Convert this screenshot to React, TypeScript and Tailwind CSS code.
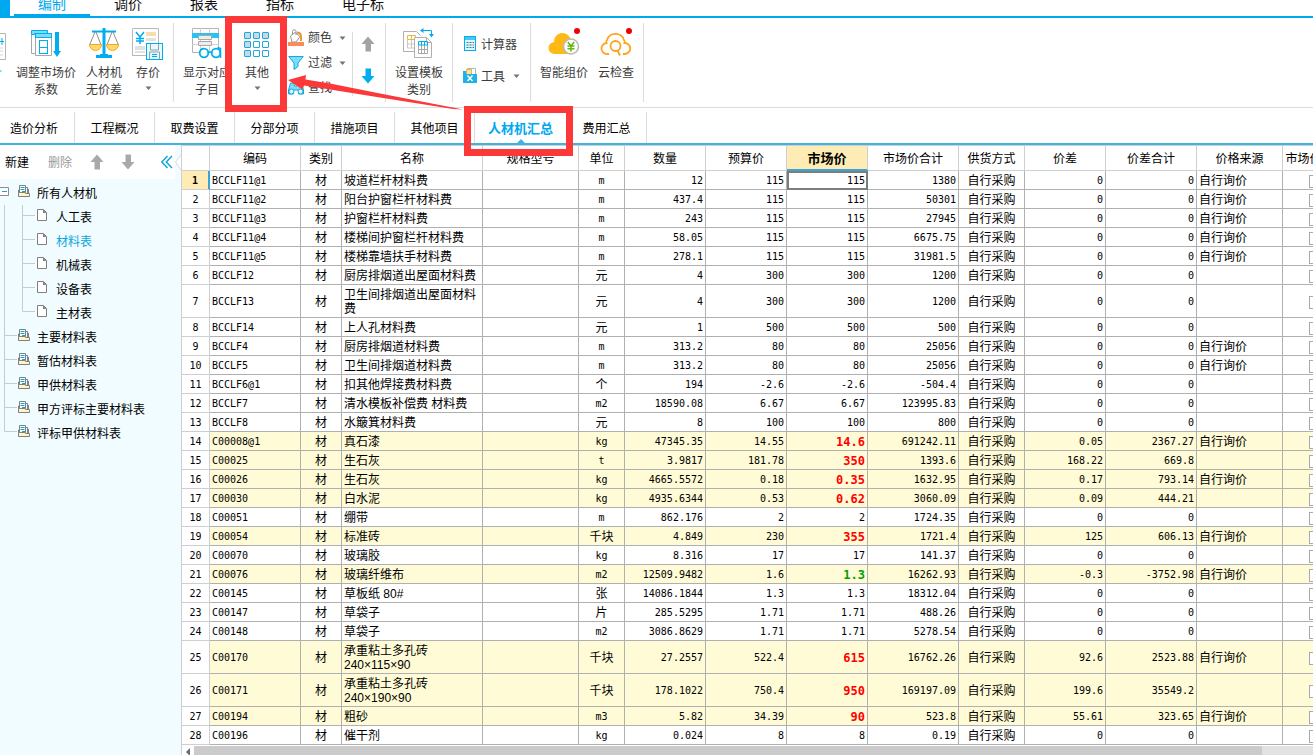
import React from "react";

const CYAN = "#00aeef";

function Caret({ className = "" }: { className?: string }) {
  return (
    <svg className={className} width="7" height="4" viewBox="0 0 7 4" aria-hidden="true">
      <path d="M0.5 0.5h6L3.5 4z" fill="#6f7480" />
    </svg>
  );
}

function ArrowUp({ color }: { color: string }) {
  return (
    <svg width="14" height="16" viewBox="0 0 14 16" aria-hidden="true">
      <path d="M7 0.5L13.5 8H10v7.5H4.500V8H0.500z" fill={color} />
    </svg>
  );
}

function ArrowDown({ color }: { color: string }) {
  return (
    <svg width="14" height="16" viewBox="0 0 14 16" aria-hidden="true">
      <path d="M7 15.5L0.5 8H4.5V0.5H10V8h3.5z" fill={color} />
    </svg>
  );
}

function AdjustIcon() {
  return (
    <svg width="30" height="32" viewBox="0 0 30 32" fill="none" aria-hidden="true">
      <path d="M0.500 5v20.500H4" stroke="#a8a8a8" />
      <path d="M0.500 2.500h16v3h-13v1h-3z" fill="#7fdcf8" stroke={CYAN} />
      <path d="M4.500 9v18.500h16V9" stroke="#a8a8a8" fill="#fff" />
      <rect x="4.500" y="5.500" width="16" height="4" fill="#7fdcf8" stroke={CYAN} />
      <rect x="8.500" y="12.500" width="8" height="13" stroke={CYAN} />
      <path d="M8.500 19.500h8" stroke={CYAN} />
      <path d="M24 4h4v19h2l-4 6-4-6h2z" fill={CYAN} />
    </svg>
  );
}

function ScaleIcon() {
  return (
    <svg width="32" height="32" viewBox="0 0 32 32" fill="none" aria-hidden="true">
      <path d="M7 4L1.5 17M8 4l5 13M24 4l-5 13M25 4l5.5 13" stroke="#909090" />
      <path d="M1.500 16.500h12a6 6 0 0 1-12 0zM18.500 16.500h12a6 6 0 0 1-12 0z" fill="#ffd96b" stroke="#f5a623" />
      <path d="M4 3.500h24" stroke={CYAN} strokeWidth="2" />
      <path d="M16 0v28" stroke={CYAN} strokeWidth="3" />
      <path d="M12 26h8v1h4v3H8v-3h4z" fill={CYAN} />
    </svg>
  );
}

function SavePriceIcon() {
  return (
    <svg width="32" height="32" viewBox="0 0 32 32" fill="none" aria-hidden="true">
      <path d="M14 27.500H0.500V0.500h26V15" stroke="#b8b8b8" fill="#fff" />
      <path d="M14 4h10v4H14z" fill="#f3dfae" />
      <path d="M14 10h10v3H14zM3 18h10v4H3zM3 23h10v2H3z" fill="#e2e2e2" />
      <path d="M4 4l4 5 4-5M8 9v7M4 10.500h8M4 13h8" stroke={CYAN} strokeWidth="1.500" />
      <rect x="14.500" y="15.500" width="16" height="16" fill="#e8f9fe" stroke={CYAN} />
      <path d="M18.500 16v6h8v-6M17.500 31v-7h10v7" stroke="#8aa3ad" />
      <path d="M20 26.500h5M20 28.500h5" stroke={CYAN} />
    </svg>
  );
}

function ShowRowsIcon() {
  return (
    <svg width="30" height="32" viewBox="0 0 30 32" fill="none" aria-hidden="true">
      <path d="M0.500 0.500h26v24h-26z" stroke="#b4b4b4" fill="#fff" />
      <path d="M8.500 0v24M17.500 0v24M0 16.500h27" stroke="#d0d0d0" />
      <path d="M0 10V5h27v5z" fill="#29c1f2" />
      <path d="M6.500 7.500h13v4h-13zM6.500 13.500h13v4h-13z" fill="#ededed" stroke="#a8a8a8" />
      <circle cx="12" cy="25" r="4.300" stroke={CYAN} strokeWidth="1.800" fill="#fff" />
      <circle cx="24" cy="25" r="4.300" stroke={CYAN} strokeWidth="1.800" fill="#fff" />
      <path d="M8 23l3-3M28.500 30V20.500l-3-1M16 25q2-2 4 0" stroke={CYAN} strokeWidth="1.500" />
    </svg>
  );
}

function GridIcon() {
  const cells = [0, 1, 2, 3, 4, 5, 6, 7, 8];
  return (
    <svg width="26" height="28" viewBox="0 0 26 28" fill="none" aria-hidden="true">
      {cells.map((n) => (
        <rect
          key={n}
          x={(n % 3) * 9 + 0.5}
          y={Math.floor(n / 3) * 9 + 0.5}
          width="6"
          height="6"
          rx="0.5"
          stroke="#1ba9de"
          fill={n < 3 || n % 3 === 0 ? "#c3dbe8" : "#ffffff"}
        />
      ))}
    </svg>
  );
}

function ColorIcon() {
  return (
    <svg width="16" height="18" viewBox="0 0 16 18" fill="none" aria-hidden="true">
      <path d="M2.500 7L7 3.500l5 4-4 5.500H4z" fill="#fff" stroke="#959595" />
      <path d="M4.500 6V2.500a1.500 1.500 0 0 1 3.500 0V6" stroke="#959595" />
      <path d="M9 3.500c4 0 4.500 3 4 8.500" stroke="#e8912d" strokeWidth="1.800" />
      <rect y="13" width="16" height="4" fill="#f98a5c" />
    </svg>
  );
}

function FilterIcon() {
  return (
    <svg width="16" height="16" viewBox="0 0 16 16" fill="none" aria-hidden="true">
      <path d="M0.800 1.500h14.400L10 8v3.500L6 14.500V8z" fill="#7fdcf8" stroke="#12a9e0" />
    </svg>
  );
}

function FindIcon() {
  return (
    <svg width="16" height="16" viewBox="0 0 16 16" fill="none" aria-hidden="true">
      <path d="M2.500 3h3l1 3h3l1-3h3l2 7v4h-5v-4h-5v4h-5v-4z" fill="#7fdcf8" stroke="#12a9e0" />
      <circle cx="3.500" cy="11.500" r="2.500" fill="#d9f5fd" stroke="#12a9e0" />
      <circle cx="12.500" cy="11.500" r="2.500" fill="#d9f5fd" stroke="#12a9e0" />
    </svg>
  );
}

function TemplateIcon() {
  return (
    <svg width="32" height="32" viewBox="0 0 32 32" fill="none" aria-hidden="true">
      <path d="M12 23.500H0.500v-20h13l4 4" fill="#fff" stroke="#b0b0b0" />
      <path d="M4.500 7.500h8v4h-8zM8.500 7.500v4" stroke="#f0b73f" />
      <path d="M4.500 12v8h7M8.500 12v8M4.500 16h7" stroke="#c8c8c8" />
      <path d="M11.500 9.500h12l5 5v15h-17z" fill="#fff" stroke="#b0b0b0" />
      <path d="M23.500 9.500v5h5" stroke="#b0b0b0" />
      <path d="M15.500 17v8.500h9V17M18.500 17v9M21.500 17v9M15.500 21.500h9" stroke="#a8a8a8" />
      <path d="M15.500 17v-3.500h9V17zM18.500 13v4M21.500 13v4" stroke={CYAN} />
      <path d="M18 2.500h10.500V8" stroke={CYAN} />
      <path d="M20.500 0L17 2.500l3.500 2.500zM26 6l2.500 3.500L31 6z" fill={CYAN} />
    </svg>
  );
}

function CalculatorIcon() {
  return (
    <svg width="13" height="16" viewBox="0 0 13 16" fill="none" aria-hidden="true">
      <rect x="0.500" y="0.500" width="11" height="14" fill="#dff6fd" stroke={CYAN} />
      <path d="M1 1h10v3H1z" fill="#45c8f1" />
      <path d="M2.500 6.500h2M5.500 6.500h2M2.500 9h2M5.500 9h2M2.500 11.500h2M5.500 11.500h2M8.500 11.500h1.500" stroke="#2c7fa3" />
      <path d="M8.500 6.500h1.500M8.500 9h1.500" stroke="#e8483c" />
    </svg>
  );
}

function ToolsIcon() {
  return (
    <svg width="14" height="16" viewBox="0 0 14 16" fill="none" aria-hidden="true">
      <path d="M4.500 0.500h8v6h-8z" fill="#fff" stroke="#b5b5b5" />
      <path d="M3.500 1.500h5v5h-5z" fill="#fbe29d" stroke="#e6b440" />
      <path d="M0 3h3v3h11v9H0z" fill="#1fb2ea" />
      <path d="M4.500 7.500l5 5.500M9.500 7.500L4.500 13" stroke="#fff" strokeWidth="1.500" />
    </svg>
  );
}

function SmartPriceIcon() {
  return (
    <svg width="32" height="32" viewBox="0 0 32 32" fill="none" aria-hidden="true">
      <path d="M7 26a6 6 0 0 1-1-12 8.500 8.500 0 0 1 16-4.500L23 12v14z" fill="#ffb914" />
      <circle cx="23" cy="18.500" r="7.500" fill="#fff" stroke="#b9b9ad" strokeWidth="1.500" />
      <path d="M19.800 14l3.200 4 3.200-4M23 18v5.500M19.500 18h7M19.500 20.800h7" stroke="#62b80c" strokeWidth="1.500" />
      <circle cx="29" cy="3" r="3" fill="#f20000" />
    </svg>
  );
}

function CloudCheckIcon() {
  return (
    <svg width="32" height="32" viewBox="0 0 32 32" fill="none" aria-hidden="true">
      <path d="M9 26H7.500a5.500 5.500 0 0 1-1-11 3 3 0 0 1 0.500-3 9 9 0 0 1 17 0 3 3 0 0 1 0.500 3 5.500 5.500 0 0 1 0.500 11h-2" stroke="#ffa31a" strokeWidth="1.800" />
      <circle cx="15.500" cy="18" r="5" stroke="#ffa31a" strokeWidth="1.800" />
      <path d="M17.500 22.500l2.500 5" stroke="#ffa31a" strokeWidth="1.800" />
      <circle cx="29" cy="3" r="3" fill="#f20000" />
    </svg>
  );
}

function BookIcon() {
  return (
    <svg width="12" height="13" viewBox="0 0 12 13" fill="none" aria-hidden="true">
      <path d="M1.500 8V0.500h6v7" fill="#fff" stroke="#808080" />
      <path d="M8 2.500h1.500V8M10.500 4v4" stroke="#808080" />
      <path d="M0.500 5v6.500h11V8.500H7.500V7.500H1.500V5z" fill="#fff6c4" stroke="#808080" />
      <path d="M2.500 2.500h4M2.500 4.500h4M4 6.500h3" stroke="#1ba0d8" />
    </svg>
  );
}

function PageIcon() {
  return (
    <svg width="10" height="13" viewBox="0 0 10 13" fill="none" aria-hidden="true">
      <path d="M0.500 0.500h6l3 3v8h-9z" fill="#fff" stroke="#808080" />
      <path d="M6 0.500v3.500h3.500z" fill="#808080" />
    </svg>
  );
}

function BigButton({
  icon,
  lines,
  caret = false,
  width,
}: {
  icon: React.ReactNode;
  lines: string[];
  caret?: boolean;
  width: string;
}) {
  return (
    <button type="button" className={`flex shrink-0 flex-col items-center pt-2.5 ${width}`}>
      <span className="flex h-[37px] items-start justify-center">{icon}</span>
      {lines.map((line) => (
        <span key={line} className="whitespace-nowrap leading-[17px]">
          {line}
        </span>
      ))}
      {caret && <Caret className="mt-1" />}
    </button>
  );
}

function Divider() {
  return <span className="my-[5px] w-px shrink-0 bg-[#dcdcdc]" />;
}

function Ribbon() {
  return (
    <div className="flex h-[90px] shrink-0 overflow-hidden border-b border-[#dcdcdc] bg-white text-xs text-[#3c3c3c]">
      <div className="w-3 shrink-0 pt-[15px]">
        <svg width="6" height="42" viewBox="0 0 6 42" fill="none" aria-hidden="true">
          <path d="M0 0.500h5.500v26H0" stroke="#b5b5b5" />
          <path d="M0 8.500h4M2 5v7" stroke={CYAN} />
          <path d="M0 15h3M0 18h3M0 22h3" stroke="#d5d5d5" />
          <path d="M0 38h1.500" stroke={CYAN} />
        </svg>
      </div>
      <BigButton icon={<AdjustIcon />} lines={["调整市场价", "系数"]} width="w-[68px]" />
      <BigButton icon={<ScaleIcon />} lines={["人材机", "无价差"]} width="w-12" />
      <BigButton icon={<SavePriceIcon />} lines={["存价"]} caret width="w-10" />
      <span className="w-[5px] shrink-0" />
      <Divider />
      <BigButton icon={<ShowRowsIcon />} lines={["显示对应", "子目"]} width="w-[66px]" />
      <BigButton
        icon={
          <span className="pt-1">
            <GridIcon />
          </span>
        }
        lines={["其他"]}
        caret
        width="w-[34px]"
      />
      <div className="flex w-[78px] shrink-0 flex-col gap-[9px] pt-3 pl-3.5">
        <button type="button" className="flex h-4 items-center gap-1">
          <ColorIcon />
          <span className="flex-1 text-left">颜色</span>
          <Caret className="mr-1.5" />
        </button>
        <button type="button" className="flex h-4 items-center gap-1">
          <FilterIcon />
          <span className="flex-1 text-left">过滤</span>
          <Caret className="mr-1.5" />
        </button>
        <button type="button" className="flex h-4 items-center gap-1">
          <FindIcon />
          <span>查找</span>
        </button>
      </div>
      <span className="mt-3.5 h-16 w-px shrink-0 bg-[#dcdcdc]" />
      <div className="mr-0.5 flex w-[30px] shrink-0 flex-col items-center gap-4 pt-[18px]">
        <button type="button" aria-label="上移">
          <ArrowUp color="#a3a3a3" />
        </button>
        <button type="button" aria-label="下移">
          <ArrowDown color="#00aeef" />
        </button>
      </div>
      <Divider />
      <BigButton icon={<TemplateIcon />} lines={["设置模板", "类别"]} width="w-[66px]" />
      <Divider />
      <div className="flex w-[77px] shrink-0 flex-col gap-4 pt-[18px] pl-2.5">
        <button type="button" className="flex h-4 items-center">
          <span className="w-[18px] pl-px">
            <CalculatorIcon />
          </span>
          <span className="pt-0.5">计算器</span>
        </button>
        <button type="button" className="flex h-4 items-center">
          <span className="w-[18px]">
            <ToolsIcon />
          </span>
          <span className="pt-0.5">工具</span>
          <Caret className="ml-2" />
        </button>
      </div>
      <Divider />
      <BigButton icon={<SmartPriceIcon />} lines={["智能组价"]} width="w-[66px]" />
      <BigButton icon={<CloudCheckIcon />} lines={["云检查"]} width="w-[38px]" />
      <span className="w-2 shrink-0" />
      <Divider />
    </div>
  );
}

const mainTabs = ["编制", "调价", "报表", "指标", "电子标"];

function MainTabs() {
  return (
    <nav className="flex h-[18px] shrink-0 items-end overflow-hidden border-b-2 border-[#00a8f0] text-sm">
      <span className="h-4 w-2.5 bg-[#00a8f0]" />
      <span className="w-1" />
      {mainTabs.map((tab, i) => (
        <a
          key={tab}
          href="#"
          className={
            i === 0
              ? "w-[76px] border-b-2 border-[#00a8f0] text-center leading-5 whitespace-nowrap text-[#00a8f0]"
              : "w-[76px] pb-0.5 pl-6 leading-5 whitespace-nowrap text-[#111111]"
          }
        >
          {tab}
        </a>
      ))}
    </nav>
  );
}

const sections = ["工程概况", "取费设置", "分部分项", "措施项目", "其他项目"];

function SectionTabs() {
  return (
    <nav className="flex h-[37px] shrink-0 border-b-2 border-[#3fb4e4] pt-1 text-xs text-black">
      <a href="#" className="flex w-[75px] items-center border-r border-[#dcdcdc] pt-0.5 pl-2.5">
        造价分析
      </a>
      {sections.map((s) => (
        <a key={s} href="#" className="flex w-20 items-center justify-center border-r border-[#dcdcdc] pt-0.5">
          {s}
        </a>
      ))}
      <a
        href="#"
        className="relative flex w-[92px] items-center justify-center border-r border-[#dcdcdc] pt-0.5 text-[13px] font-bold text-[#00a8f0]"
      >
        人材机汇总
        <svg className="absolute bottom-0 left-[42px]" width="8" height="4" viewBox="0 0 8 4" aria-hidden="true">
          <path d="M4 0l4 4H0z" fill="#3fb4e4" />
        </svg>
      </a>
      <a href="#" className="flex w-20 items-center justify-center border-r border-[#dcdcdc] pt-0.5">
        费用汇总
      </a>
    </nav>
  );
}

function ChildRow({ label, active = false, last = false }: { label: string; active?: boolean; last?: boolean }) {
  return (
    <li className="flex h-6">
      <svg width="37" height="24" viewBox="0 0 37 24" fill="none" aria-hidden="true">
        <path d={last ? "M4.500 0v24M22.500 0v10.500H35" : "M4.500 0v24M22.500 0v24M22.500 10.500H35"} stroke="#c6cccd" />
      </svg>
      <span className="w-[19px] pt-1">
        <PageIcon />
      </span>
      <a href="#" className={active ? "leading-[26px] text-[#0aa5e0]" : "leading-[26px] text-black"}>
        {label}
      </a>
    </li>
  );
}

function GroupRow({ label, last = false }: { label: string; last?: boolean }) {
  return (
    <li className="flex h-6">
      <svg width="18" height="24" viewBox="0 0 18 24" fill="none" aria-hidden="true">
        <path d={last ? "M4.500 0v10.500H17" : "M4.500 0v24M4.500 10.500H17"} stroke="#c6cccd" />
      </svg>
      <span className="w-[19px] pt-1">
        <BookIcon />
      </span>
      <a href="#" className="leading-[26px] whitespace-nowrap text-black">
        {label}
      </a>
    </li>
  );
}

function Sidebar() {
  return (
    <aside className="w-[181px] shrink-0 bg-[#f0fcff] text-xs">
      <div className="flex h-[34px]">
        <div className="flex w-[175px] items-center bg-white pl-[5px]">
          <button type="button" className="w-[43px] pt-0.5 text-left text-black">
            新建
          </button>
          <button type="button" className="w-[42px] pt-0.5 text-left text-[#9a9a9a]">
            删除
          </button>
          <button type="button" aria-label="上移" className="w-[31px]">
            <ArrowUp color="#a9a9a9" />
          </button>
          <button type="button" aria-label="下移" className="w-10">
            <ArrowDown color="#a9a9a9" />
          </button>
          <button type="button" aria-label="收起">
            <svg width="12" height="14" viewBox="0 0 12 14" fill="none" aria-hidden="true">
              <path d="M6.500 1L0.800 7l5.700 6M11 1L5.300 7l5.700 6" stroke="#14a5d8" strokeWidth="1.500" />
            </svg>
          </button>
        </div>
        <svg width="6" height="34" viewBox="0 0 6 34" fill="none" aria-hidden="true">
          <path d="M6 10L0 17l6 8z" fill="#fff" />
          <path d="M6 10L0.500 17 6 25" stroke="#d3d8da" />
        </svg>
      </div>
      <ul className="pt-0.5">
        <li>
          <div className="flex h-6">
            <button type="button" aria-label="折叠" className="flex w-[18px] items-start pt-1.5">
              <svg width="9" height="9" viewBox="0 0 9 9" fill="none" aria-hidden="true">
                <path d="M-0.500 0.500h9v8h-9z" fill="#fff" stroke="#8c8c8c" />
                <path d="M2 4.500h5" stroke="#1ba0d8" />
              </svg>
            </button>
            <span className="w-[19px] pt-1">
              <BookIcon />
            </span>
            <a href="#" className="leading-[26px] text-black">
              所有人材机
            </a>
          </div>
          <ul>
            <ChildRow label="人工表" />
            <ChildRow label="材料表" active />
            <ChildRow label="机械表" />
            <ChildRow label="设备表" />
            <ChildRow label="主材表" last />
          </ul>
        </li>
        <GroupRow label="主要材料表" />
        <GroupRow label="暂估材料表" />
        <GroupRow label="甲供材料表" />
        <GroupRow label="甲方评标主要材料表" />
        <GroupRow label="评标甲供材料表" last />
      </ul>
    </aside>
  );
}

type Item = {
  code: string;
  name: string;
  unit: string;
  qty: string;
  budget: string;
  market: string;
  total: string;
  diff: string;
  diffTotal: string;
  source?: boolean;
  tone?: "up" | "down";
};

function item(
  code: string,
  name: string,
  unit: string,
  qty: string,
  budget: string,
  market: string,
  total: string,
  diff = "0",
  diffTotal = "0",
  source = false,
  tone?: "up" | "down",
): Item {
  return { code, name, unit, qty, budget, market, total, diff, diffTotal, source, tone };
}

const items: Item[] = [
  item("BCCLF11@1", "坡道栏杆材料费", "m", "12", "115", "115", "1380", "0", "0", true),
  item("BCCLF11@2", "阳台护窗栏杆材料费", "m", "437.4", "115", "115", "50301", "0", "0", true),
  item("BCCLF11@3", "护窗栏杆材料费", "m", "243", "115", "115", "27945", "0", "0", true),
  item("BCCLF11@4", "楼梯间护窗栏杆材料费", "m", "58.05", "115", "115", "6675.75", "0", "0", true),
  item("BCCLF11@5", "楼梯靠墙扶手材料费", "m", "278.1", "115", "115", "31981.5", "0", "0", true),
  item("BCCLF12", "厨房排烟道出屋面材料费", "元", "4", "300", "300", "1200"),
  item("BCCLF13", "卫生间排烟道出屋面材料费", "元", "4", "300", "300", "1200"),
  item("BCCLF14", "上人孔材料费", "元", "1", "500", "500", "500"),
  item("BCCLF4", "厨房排烟道材料费", "m", "313.2", "80", "80", "25056", "0", "0", true),
  item("BCCLF5", "卫生间排烟道材料费", "m", "313.2", "80", "80", "25056", "0", "0", true),
  item("BCCLF6@1", "扣其他焊接费材料费", "个", "194", "-2.6", "-2.6", "-504.4"),
  item("BCCLF7", "清水模板补偿费 材料费", "m2", "18590.08", "6.67", "6.67", "123995.83"),
  item("BCCLF8", "水簸箕材料费", "元", "8", "100", "100", "800"),
  item("C00008@1", "真石漆", "kg", "47345.35", "14.55", "14.6", "691242.11", "0.05", "2367.27", true, "up"),
  item("C00025", "生石灰", "t", "3.9817", "181.78", "350", "1393.6", "168.22", "669.8", false, "up"),
  item("C00026", "生石灰", "kg", "4665.5572", "0.18", "0.35", "1632.95", "0.17", "793.14", true, "up"),
  item("C00030", "白水泥", "kg", "4935.6344", "0.53", "0.62", "3060.09", "0.09", "444.21", false, "up"),
  item("C00051", "绷带", "m", "862.176", "2", "2", "1724.35"),
  item("C00054", "标准砖", "千块", "4.849", "230", "355", "1721.4", "125", "606.13", true, "up"),
  item("C00070", "玻璃胶", "kg", "8.316", "17", "17", "141.37"),
  item("C00076", "玻璃纤维布", "m2", "12509.9482", "1.6", "1.3", "16262.93", "-0.3", "-3752.98", true, "down"),
  item("C00145", "草板纸 80#", "张", "14086.1844", "1.3", "1.3", "18312.04"),
  item("C00147", "草袋子", "片", "285.5295", "1.71", "1.71", "488.26"),
  item("C00148", "草袋子", "m2", "3086.8629", "1.71", "1.71", "5278.54"),
  item("C00170", "承重粘土多孔砖\n240×115×90", "千块", "27.2557", "522.4", "615", "16762.26", "92.6", "2523.88", true, "up"),
  item("C00171", "承重粘土多孔砖\n240×190×90", "千块", "178.1022", "750.4", "950", "169197.09", "199.6", "35549.2", false, "up"),
  item("C00194", "粗砂", "m3", "5.82", "34.39", "90", "523.8", "55.61", "323.65", true, "up"),
  item("C00196", "催干剂", "kg", "0.024", "8", "8", "0.19"),
];

const columns: { title: string; width: string }[] = [
  { title: "", width: "w-7" },
  { title: "编码", width: "w-[91px]" },
  { title: "类别", width: "w-[41px]" },
  { title: "名称", width: "w-[141px]" },
  { title: "规格型号", width: "w-24" },
  { title: "单位", width: "w-[46px]" },
  { title: "数量", width: "w-[81px]" },
  { title: "预算价", width: "w-[81px]" },
  { title: "市场价", width: "w-[81px]" },
  { title: "市场价合计", width: "w-[91px]" },
  { title: "供货方式", width: "w-[66px]" },
  { title: "价差", width: "w-[81px]" },
  { title: "价差合计", width: "w-[91px]" },
  { title: "价格来源", width: "w-[86px]" },
  { title: "市场价锁定", width: "w-[66px]" },
];

const cell = "border-r border-b border-[#b0b0b0] px-0.5 pt-[3px] pb-px";
const mono = "font-['DejaVu_Sans_Mono','Noto_Sans_CJK_SC',monospace] text-[10px]";
const strong = "font-['DejaVu_Sans_Mono',monospace] text-right text-xs leading-[14px] font-bold";

function isLatin(text: string) {
  return /^[\x20-\x7e]+$/.test(text);
}

function MaterialRow({ data, index }: { data: Item; index: number }) {
  const selected = index === 0;
  const tint = data.tone ? "bg-[#fffbd6]" : "bg-white";
  const num = `${cell} ${mono} text-right`;
  let market = num;
  if (data.tone === "up") market = `${cell} ${strong} text-[#ff0000]`;
  if (data.tone === "down") market = `${cell} ${strong} text-[#00a000]`;
  if (selected) market = `${num} outline-2 -outline-offset-2 outline-[#7d7d7d]`;
  return (
    <tr className={`leading-[14px] ${tint}`}>
      <th
        scope="row"
        className={
          selected
            ? `border-r-2 border-b border-r-[#3aa6d6] border-b-[#cfcfcf] bg-[#ffecb4] pt-[3px] pb-px leading-[14px] font-bold ${mono}`
            : `border-r border-b border-[#cfcfcf] bg-white pt-[3px] pb-px leading-[14px] font-normal ${mono}`
        }
      >
        {index + 1}
      </th>
      <td className={`${cell} ${mono}`}>{data.code}</td>
      <td className={`${cell} text-center`}>材</td>
      <td className={`${cell} whitespace-pre-line`}>{data.name}</td>
      <td className={cell} />
      <td className={`${cell} text-center ${isLatin(data.unit) ? mono : ""}`}>{data.unit}</td>
      <td className={num}>{data.qty}</td>
      <td className={num}>{data.budget}</td>
      <td className={market}>{data.market}</td>
      <td className={num}>{data.total}</td>
      <td className={`${cell} text-center`}>自行采购</td>
      <td className={num}>{data.diff}</td>
      <td className={num}>{data.diffTotal}</td>
      <td className={cell}>{data.source ? "自行询价" : ""}</td>
      <td className={cell}>
        <input
          type="checkbox"
          aria-label={`锁定 ${data.code}`}
          className="mx-auto block size-[13px] appearance-none border border-[#a9a9a9] bg-white"
        />
      </td>
    </tr>
  );
}

function MaterialTable() {
  return (
    <main className="flex min-w-0 flex-1 flex-col border-l border-[#cfcfcf]">
      <div className="min-h-0 flex-1 overflow-hidden">
        <table className="w-[1167px] table-fixed border-separate border-spacing-0 text-xs text-black">
          <thead>
            <tr className="h-[26px] leading-[18px]">
              {columns.map((c) => (
                <th
                  key={c.title}
                  scope="col"
                  className={
                    c.title === "市场价"
                      ? `${c.width} border-t border-r border-b-2 border-t-[#cfcfcf] border-r-[#cfcfcf] border-b-[#3aa6d6] bg-[#ffecb4] pt-0.5 text-[13px] font-bold`
                      : `${c.width} border-t border-r border-b border-[#cfcfcf] bg-white pt-0.5 font-normal whitespace-nowrap`
                  }
                >
                  {c.title}
                </th>
              ))}
            </tr>
          </thead>
          <tbody>
            {items.map((data, i) => (
              <MaterialRow key={data.code} data={data} index={i} />
            ))}
          </tbody>
        </table>
      </div>
      <div className="flex h-[9px] shrink-0 overflow-hidden bg-[#e2e2e2]">
        <button type="button" aria-label="向左滚动" className="flex w-3 items-start justify-center bg-white pt-0.5">
          <svg width="4" height="8" viewBox="0 0 4 8" aria-hidden="true">
            <path d="M4 0v8L0 4z" fill="#6a6a6a" />
          </svg>
        </button>
        <span className="mr-[51px] flex-1 bg-[#cbcbcb]" />
      </div>
    </main>
  );
}

function Annotations() {
  return (
    <div className="pointer-events-none" aria-hidden="true">
      <span className="absolute top-4 left-[225px] h-24 w-[62px] border-7 border-[#fc3838]" />
      <span className="absolute top-[106px] left-[464px] h-[50px] w-[109px] border-7 border-[#fc3838]" />
      <svg className="absolute top-[74px] left-[288px]" width="176" height="37" viewBox="0 0 176 37">
        <path d="M0 6L18 1 17.500 5.500 42 9.500 92 19.500 175 35.500 165 35 92 23.500 42 15.500 16 11.500 14.500 15.500z" fill="#fc3838" />
      </svg>
    </div>
  );
}

export default function App() {
  return (
    <div className="relative flex h-screen flex-col overflow-hidden bg-white font-['Liberation_Sans','Noto_Sans_CJK_SC',sans-serif]">
      <MainTabs />
      <Ribbon />
      <SectionTabs />
      <div className="flex min-h-0 flex-1">
        <Sidebar />
        <MaterialTable />
      </div>
      <Annotations />
    </div>
  );
}
